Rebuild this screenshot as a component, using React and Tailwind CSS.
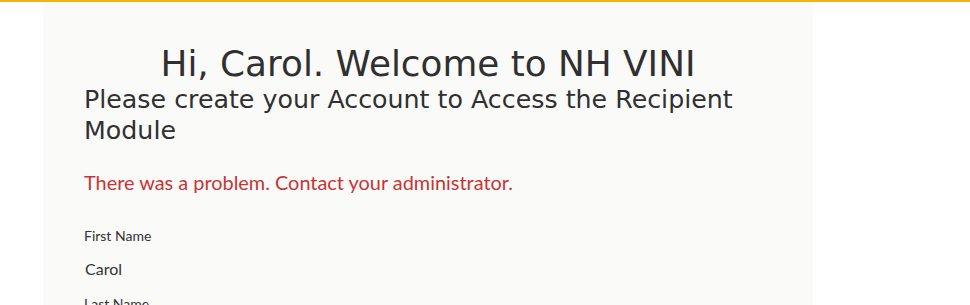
export default function App() {
  return (
    <div className="min-h-[305px] bg-white overflow-hidden">
      <div className="h-[2px] bg-[#f6b400]" />
      <div className="mt-px ml-[43px] w-[770px] min-h-[400px] bg-[#fafaf9] pl-[41px] pr-[41px] pt-[41px]">
        <h1 className="text-center text-[35.8px] leading-[40px] text-[#303030] font-['DejaVu_Sans',sans-serif]">
          Hi, Carol. Welcome to NH VINI
        </h1>
        <h3 className="text-[25.3px] leading-[31px] text-[#303030] font-['DejaVu_Sans',sans-serif]">
          Please create your Account to Access the Recipient Module
        </h3>
        <p className="mt-[22px] text-[19.9px] leading-[28px] text-[#c83434] font-['Lato',sans-serif]">
          There was a problem. Contact your administrator.
        </p>
        <div className="mt-[30px] font-['Lato',sans-serif] text-[#333]">
          <label className="block text-[14px] leading-[20px]">First Name</label>
          <div className="mt-[11px] pl-[1px] text-[16px] leading-[24px]">Carol</div>
          <label className="mt-[13px] block text-[14px] leading-[20px]">Last Name</label>
        </div>
      </div>
    </div>
  );
}
